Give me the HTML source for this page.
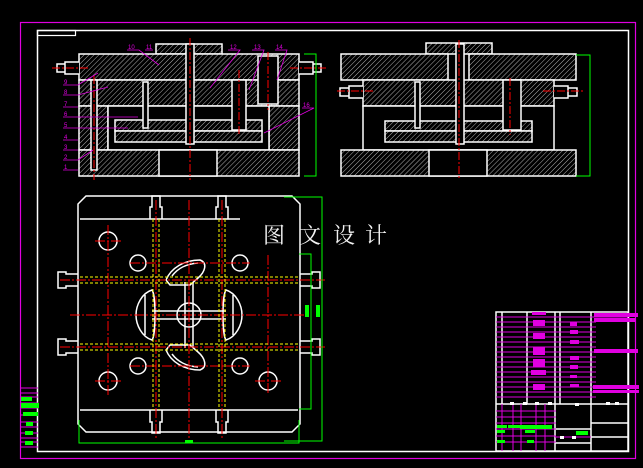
<!DOCTYPE html>
<html><head><meta charset="utf-8"><style>
html,body{margin:0;padding:0;background:#000;width:643px;height:468px;overflow:hidden}
svg{display:block}
</style></head><body>
<svg width="643" height="468" viewBox="0 0 643 468" xmlns="http://www.w3.org/2000/svg">
<defs>
<pattern id="h" width="3.5" height="3.5" patternUnits="userSpaceOnUse" patternTransform="rotate(45)">
<rect width="3.5" height="3.5" fill="#000"/><line x1="0" y1="0" x2="0" y2="3.5" stroke="#b0b0b0" stroke-width="1"/>
</pattern>
</defs>
<rect width="643" height="468" fill="#000"/>
<rect x="20.5" y="22.5" width="615" height="436" fill="none" stroke="#e000e0" stroke-width="1.2"/>
<rect x="37.5" y="30.5" width="591" height="421" fill="none" stroke="#fff" stroke-width="1.5"/>
<rect x="37.5" y="30.5" width="38" height="5" fill="none" stroke="#fff" stroke-width="1.2"/>

<g stroke="#fff" stroke-width="1.5">
<rect x="156" y="44" width="66" height="10" fill="url(#h)"/>
<rect x="79" y="54" width="220" height="26" fill="url(#h)"/>
<rect x="79" y="80" width="220" height="26" fill="url(#h)"/>
<rect x="79" y="106" width="29" height="44" fill="url(#h)"/>
<rect x="269" y="106" width="30" height="44" fill="url(#h)"/>
<rect x="108" y="106" width="161" height="44" fill="#000"/>
<rect x="115" y="120" width="147" height="11" fill="url(#h)"/>
<rect x="115" y="131" width="147" height="11" fill="url(#h)"/>
<rect x="79" y="150" width="220" height="26" fill="url(#h)"/>
<rect x="159" y="150" width="58" height="26" fill="#000"/>
<rect x="186" y="44" width="8" height="100" fill="#000"/>
<rect x="232" y="80" width="14" height="50" fill="#000"/>
<rect x="258" y="56" width="20" height="48" fill="#000"/>
<rect x="91" y="80" width="6" height="90" fill="#000"/>
<rect x="143" y="82" width="5" height="46" fill="#000"/>
<path d="M79 62h-14v12h14M65 64h-8v8h8" fill="#000"/>
<path d="M299 62h14v12h-14M313 64h8v8h-8" fill="#000"/>
</g>
<g stroke="#f00" stroke-width="1" stroke-dasharray="8,2,2,2">
<line x1="190" y1="38" x2="190" y2="180"/><line x1="94" y1="76" x2="94" y2="180"/>
<line x1="239" y1="70" x2="239" y2="135"/><line x1="268" y1="52" x2="268" y2="110"/>
<line x1="52" y1="68" x2="88" y2="68"/><line x1="290" y1="68" x2="326" y2="68"/>
</g>
<g stroke="#e000e0" stroke-width="0.8" fill="none">
<path d="M63 85h15l20 -12M63 95h15l30 -8M63 107h15M63 117h15l60 0M63 128h15l50 0M63 140h15M63 150h15M63 160h15l15 -10M63 170h15"/>
<path d="M127 50h12l20 15M145 50h8M228 50h12l-30 38M252 50h12l-15 40M275 50h12l-10 30M302 108h12l-50 25"/>
</g>
<g fill="#e000e0" font-family="Liberation Sans,sans-serif" font-size="6">
<text x="64" y="84">9</text><text x="64" y="94">8</text><text x="64" y="106">7</text><text x="64" y="116">6</text><text x="64" y="127">5</text><text x="64" y="139">4</text><text x="64" y="149">3</text><text x="64" y="159">2</text><text x="64" y="169">1</text>
<text x="128" y="49">10</text><text x="146" y="49">11</text><text x="230" y="49">12</text><text x="254" y="49">13</text><text x="276" y="49">14</text><text x="303" y="107">16</text>
</g>
<path d="M304 54h12v122h-12" stroke="#0f0" fill="none" stroke-width="1"/>

<g stroke="#fff" stroke-width="1.5">
<rect x="426" y="43" width="66" height="11" fill="url(#h)"/>
<rect x="341" y="54" width="107" height="26" fill="url(#h)"/>
<rect x="469" y="54" width="107" height="26" fill="url(#h)"/>
<rect x="363" y="80" width="191" height="26" fill="url(#h)"/>
<rect x="363" y="106" width="191" height="44" fill="#000"/>
<rect x="385" y="121" width="147" height="10" fill="url(#h)"/>
<rect x="385" y="131" width="147" height="11" fill="url(#h)"/>
<rect x="341" y="150" width="235" height="26" fill="url(#h)"/>
<rect x="429" y="150" width="58" height="26" fill="#000"/>
<rect x="456" y="44" width="8" height="100" fill="#000"/>
<rect x="503" y="80" width="18" height="50" fill="#000"/>
<rect x="415" y="82" width="5" height="46" fill="#000"/>
<path d="M363 86h-14v12h14M349 88h-9v8h9" fill="#000"/>
<path d="M554 86h14v12h-14M568 88h9v8h-9" fill="#000"/>
</g>
<g stroke="#f00" stroke-width="1" stroke-dasharray="8,2,2,2">
<line x1="459" y1="40" x2="459" y2="180"/><line x1="510" y1="78" x2="510" y2="135"/>
<line x1="337" y1="91" x2="375" y2="91"/><line x1="543" y1="91" x2="583" y2="91"/>
</g>
<path d="M576 55h14v121h-14" stroke="#0f0" fill="none" stroke-width="1"/>

<g stroke="#fff" stroke-width="1.5" fill="none">
<path d="M86 196h206l8 8v220l-8 8h-206l-8-8v-220z"/>
<line x1="80" y1="219" x2="240" y2="219"/>
<line x1="80" y1="410" x2="298" y2="410"/>
<path d="M150 219v-12h2v-11h8v11h2v12M216 219v-12h2v-11h8v11h2v12"/>
<path d="M150 410v12h2v11h8v-11h2v-12M216 410v12h2v11h8v-11h2v-12"/>
<path d="M78 274h-12v-2h-8v16h8v-2h12M78 341h-12v-2h-8v16h8v-2h12"/>
<path d="M300 274h12v-2h8v16h-8v-2h-12M300 341h12v-2h8v16h-8v-2h-12"/>
<circle cx="108" cy="241" r="9"/><circle cx="108" cy="381" r="9"/><circle cx="268" cy="381" r="9"/>
<circle cx="138" cy="263" r="8"/><circle cx="240" cy="263" r="8"/><circle cx="138" cy="366" r="8"/><circle cx="240" cy="366" r="8"/>
<circle cx="189" cy="315" r="12"/>
<path d="M185 282v66M193 282v66M152 311h74M152 319h74"/>
<path d="M166 280c5-12 18-20 34-20 8 3 5 12-2 18l-8 7h-20z"/>
<path d="M166 350c5 12 18 20 34 20 8-3 5-12-2-18l-8-7h-20z"/>
<path d="M152 290c-10 3-16 15-16 25s6 22 16 25c4-5 4-45 0-50z"/>
<path d="M226 290c10 3 16 15 16 25s-6 22-16 25c-4-5-4-45 0-50z"/>
<path d="M172 276c6-8 14-12 26-13M172 354c6 8 14 12 26 13M145 295v40M233 295v40"/>
</g>
<g stroke="#f00" stroke-width="1" stroke-dasharray="10,2,2,2">
<line x1="189" y1="200" x2="189" y2="440"/><line x1="70" y1="315" x2="305" y2="315"/>
<line x1="156" y1="200" x2="156" y2="440"/><line x1="222" y1="200" x2="222" y2="440"/>
<line x1="60" y1="280" x2="325" y2="280"/><line x1="60" y1="347" x2="325" y2="347"/>
<line x1="108" y1="225" x2="108" y2="395"/><line x1="268" y1="255" x2="268" y2="395"/>
<line x1="130" y1="263" x2="250" y2="263"/><line x1="130" y1="366" x2="250" y2="366"/>
<line x1="95" y1="241" x2="122" y2="241"/><line x1="95" y1="381" x2="122" y2="381"/><line x1="255" y1="381" x2="282" y2="381"/>
</g>
<g stroke="#ff0" stroke-width="1" stroke-dasharray="3,2">
<line x1="153" y1="219" x2="153" y2="410"/><line x1="159" y1="219" x2="159" y2="410"/>
<line x1="219" y1="219" x2="219" y2="410"/><line x1="225" y1="219" x2="225" y2="410"/>
<line x1="80" y1="277" x2="298" y2="277"/><line x1="80" y1="283" x2="298" y2="283"/>
<line x1="80" y1="344" x2="298" y2="344"/><line x1="80" y1="350" x2="298" y2="350"/>
</g>
<g stroke="#0f0" stroke-width="1" fill="none">
<path d="M284 197h38v244h-38M299 254h12v155h-12"/>
<path d="M79 420v23h220v-23"/>
</g>
<rect x="305" y="305" width="4" height="12" fill="#0f0"/><rect x="316" y="305" width="4" height="12" fill="#0f0"/><rect x="185" y="440" width="8" height="3" fill="#0f0"/>
<g fill="#f2f2f2" font-family="Liberation Serif,'Noto Serif CJK SC',serif" font-size="22">
<text x="263" y="243">图</text><text x="299" y="243">文</text><text x="333" y="243">设</text><text x="365" y="243">计</text>
</g>

<g stroke="#e000e0" stroke-width="1">
<path d="M20 388h18M20 393h18M20 397h18M20 403h18M20 408h18M20 415h18M20 422h18M20 427h18M20 433h18M20 438h18M20 442h18M20 447h18"/>
</g>
<g fill="#0f0"><rect x="21" y="397" width="11" height="4"/><rect x="21" y="403" width="18" height="5"/><rect x="23" y="412" width="15" height="4"/><rect x="26" y="422" width="7" height="4"/><rect x="25" y="431" width="8" height="4"/><rect x="25" y="441" width="8" height="4"/></g>

<g stroke="#fff" stroke-width="1.5" fill="none">
<rect x="496" y="312" width="132" height="139"/>
<line x1="502" y1="312" x2="502" y2="404"/><line x1="527" y1="312" x2="527" y2="404"/><line x1="555" y1="312" x2="555" y2="404"/><line x1="560" y1="312" x2="560" y2="404"/><line x1="591" y1="312" x2="591" y2="451"/>
<line x1="496" y1="404" x2="628" y2="404"/><line x1="555" y1="404" x2="555" y2="451"/>
<line x1="591" y1="423" x2="628" y2="423"/><line x1="591" y1="437" x2="628" y2="437"/>
<line x1="555" y1="429" x2="591" y2="429"/><line x1="555" y1="443" x2="591" y2="443"/>
</g>
<g stroke="#e000e0" stroke-width="1">
<path d="M496 317h132M496 322h100M496 327h100M496 332h100M496 337h100M496 342h100M496 347h100M496 352h100M496 357h100M496 362h100M496 367h100M496 372h100M496 377h100M496 382h100M496 387h100M496 392h100M496 397h100"/>
<path d="M496 411h60M496 417h60M496 423h60M496 429h60M496 436h60M496 442h60M502 404v47M513 404v47M521 404v47M536 404v47M545 404v47M555 437h36"/>
</g>
<g fill="#e000e0">
<rect x="532" y="312" width="14" height="3"/><rect x="533" y="320" width="12" height="6"/><rect x="533" y="333" width="12" height="6"/><rect x="533" y="347" width="12" height="8"/><rect x="533" y="359" width="12" height="8"/><rect x="531" y="370" width="15" height="5"/><rect x="533" y="384" width="12" height="6"/>
<rect x="570" y="322" width="7" height="4"/><rect x="570" y="330" width="8" height="4"/><rect x="570" y="340" width="9" height="4"/><rect x="570" y="356" width="9" height="4"/><rect x="570" y="365" width="8" height="4"/><rect x="570" y="375" width="7" height="3"/><rect x="570" y="384" width="9" height="3"/>
<rect x="594" y="313" width="44" height="4"/><rect x="594" y="318" width="42" height="4"/><rect x="594" y="349" width="44" height="4"/><rect x="593" y="385" width="46" height="4"/><rect x="593" y="390" width="46" height="3"/>
</g>
<g fill="#0f0"><rect x="497" y="425" width="10" height="3"/><rect x="508" y="425" width="16" height="3"/><rect x="520" y="425" width="32" height="4"/><rect x="497" y="430" width="8" height="3"/><rect x="525" y="430" width="10" height="3"/><rect x="497" y="440" width="8" height="3"/><rect x="527" y="440" width="7" height="3"/><rect x="576" y="431" width="12" height="4"/></g>
<g fill="#fff"><rect x="510" y="402" width="4" height="3"/><rect x="523" y="402" width="4" height="3"/><rect x="535" y="402" width="4" height="3"/><rect x="548" y="402" width="4" height="3"/><rect x="575" y="403" width="4" height="3"/><rect x="606" y="402" width="4" height="3"/><rect x="615" y="402" width="4" height="3"/><rect x="560" y="436" width="4" height="3"/><rect x="572" y="436" width="4" height="3"/></g>
</svg>
</body></html>
